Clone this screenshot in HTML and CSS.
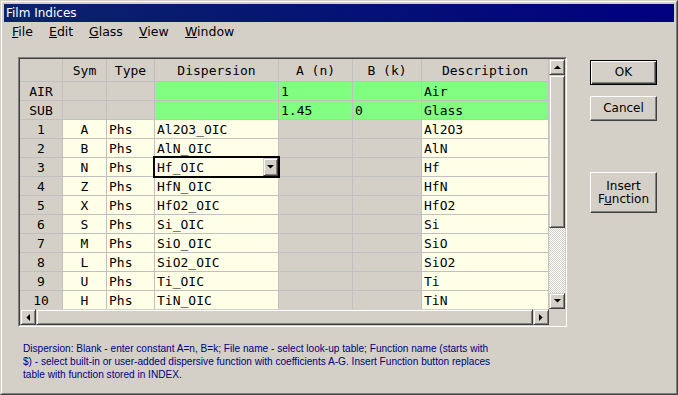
FILE: index.html
```html
<!DOCTYPE html>
<html>
<head>
<meta charset="utf-8">
<title>Film Indices</title>
<link rel="stylesheet" href="styles.css">
</head>
<body>
<div class="window">
  <div class="frame">
    <div class="titlebar"><span class="title">Film Indices</span></div>
    <div class="menubar">
      <span class="menu m-file"><u>F</u>ile</span>
      <span class="menu m-edit"><u>E</u>dit</span>
      <span class="menu m-glass"><u>G</u>lass</span>
      <span class="menu m-view"><u>V</u>iew</span>
      <span class="menu m-window"><u>W</u>indow</span>
    </div>
    <div class="client">
      <div class="main">
        <div class="gridframe">
          <div class="gridinner">
            <div class="gridtop">
              <div class="viewport">
                <div class="grid">
                  <div class="cell h"></div><div class="cell h ctr">Sym</div><div class="cell h ctr">Type</div><div class="cell h ctr">Dispersion</div><div class="cell h ctr">A (n)</div><div class="cell h ctr">B (k)</div><div class="cell h ctr">Description</div>

                  <div class="cell rh">AIR</div><div class="cell g"></div><div class="cell g"></div><div class="cell gr"></div><div class="cell gr">1</div><div class="cell gr"></div><div class="cell gr">Air</div>
                  <div class="cell rh">SUB</div><div class="cell g"></div><div class="cell g"></div><div class="cell gr"></div><div class="cell gr">1.45</div><div class="cell gr">0</div><div class="cell gr">Glass</div>

                  <div class="cell rh">1</div><div class="cell c ctr">A</div><div class="cell c">Phs</div><div class="cell c">Al2O3_OIC</div><div class="cell g"></div><div class="cell g"></div><div class="cell c">Al2O3</div>
                  <div class="cell rh">2</div><div class="cell c ctr">B</div><div class="cell c">Phs</div><div class="cell c">AlN_OIC</div><div class="cell g"></div><div class="cell g"></div><div class="cell c">AlN</div>
                  <div class="cell rh">3</div><div class="cell c ctr">N</div><div class="cell c">Phs</div><div class="cell c editcell"><div class="editor"><span class="edtext">Hf_OIC</span><span class="ddbtn"><svg width="7" height="4" viewBox="0 0 7 4"><polygon points="0,0 7,0 3.5,3.6" fill="#000"/></svg></span></div></div><div class="cell g"></div><div class="cell g"></div><div class="cell c">Hf</div>
                  <div class="cell rh">4</div><div class="cell c ctr">Z</div><div class="cell c">Phs</div><div class="cell c">HfN_OIC</div><div class="cell g"></div><div class="cell g"></div><div class="cell c">HfN</div>
                  <div class="cell rh">5</div><div class="cell c ctr">X</div><div class="cell c">Phs</div><div class="cell c">HfO2_OIC</div><div class="cell g"></div><div class="cell g"></div><div class="cell c">HfO2</div>
                  <div class="cell rh">6</div><div class="cell c ctr">S</div><div class="cell c">Phs</div><div class="cell c">Si_OIC</div><div class="cell g"></div><div class="cell g"></div><div class="cell c">Si</div>
                  <div class="cell rh">7</div><div class="cell c ctr">M</div><div class="cell c">Phs</div><div class="cell c">SiO_OIC</div><div class="cell g"></div><div class="cell g"></div><div class="cell c">SiO</div>
                  <div class="cell rh">8</div><div class="cell c ctr">L</div><div class="cell c">Phs</div><div class="cell c">SiO2_OIC</div><div class="cell g"></div><div class="cell g"></div><div class="cell c">SiO2</div>
                  <div class="cell rh">9</div><div class="cell c ctr">U</div><div class="cell c">Phs</div><div class="cell c">Ti_OIC</div><div class="cell g"></div><div class="cell g"></div><div class="cell c">Ti</div>
                  <div class="cell rh">10</div><div class="cell c ctr">H</div><div class="cell c">Phs</div><div class="cell c">TiN_OIC</div><div class="cell g"></div><div class="cell g"></div><div class="cell c">TiN</div>
                </div>
              </div>
              <div class="vscroll">
                <div class="sbtn"><svg width="7" height="4" viewBox="0 0 7 4"><polygon points="0,4 7,4 3.5,0.4" fill="#000"/></svg></div>
                <div class="thumb vthumb"></div>
                <div class="track"></div>
                <div class="sbtn"><svg width="7" height="4" viewBox="0 0 7 4"><polygon points="0,0 7,0 3.5,3.6" fill="#000"/></svg></div>
              </div>
            </div>
            <div class="hbar">
              <div class="hscroll">
                <div class="sbtn"><svg width="4" height="7" viewBox="0 0 4 7"><polygon points="4,0 4,7 0.4,3.5" fill="#000"/></svg></div>
                <div class="thumb hthumb"></div>
                <div class="sbtn"><svg width="4" height="7" viewBox="0 0 4 7"><polygon points="0,0 0,7 3.6,3.5" fill="#000"/></svg></div>
              </div>
              <div class="corner"></div>
            </div>
          </div>
        </div>
        <div class="buttons">
          <div class="btn default"><span>OK</span></div>
          <div class="btn cancel"><span>Cancel</span></div>
          <div class="btn insert"><span>Insert<br>F<u>u</u>nction</span></div>
        </div>
      </div>
      <p class="help">Dispersion: Blank - enter constant A=n, B=k; File name - select look-up table; Function name (starts with<br>$) - select built-in or user-added dispersive function with coefficients A-G. Insert Function button replaces<br>table with function stored in INDEX.</p>
    </div>
  </div>
</div>
</body>
</html>
```

FILE: styles.css
```css
html, body {
  margin: 0;
  padding: 0;
  background: #d4d0c8;
}

.window {
  width: 678px;
  height: 395px;
  box-sizing: border-box;
  border: 1px solid;
  border-color: #d4d0c8 #404040 #404040 #d4d0c8;
  background: #d4d0c8;
  font-family: "DejaVu Sans", sans-serif;
  font-size: 12px;
  color: #000;
}

.frame {
  height: 100%;
  box-sizing: border-box;
  border: 1px solid;
  border-color: #ffffff #808080 #808080 #ffffff;
  padding: 2px;
}

.titlebar {
  height: 18px;
  background: linear-gradient(to right, #0a246a, #000080);
  color: #fff;
  line-height: 18px;
  padding-left: 2px;
  white-space: nowrap;
}

.menubar {
  height: 20px;
  line-height: 20px;
  display: flex;
  padding-left: 8px;
  white-space: nowrap;
  font-size: 12.5px;
}
.menu { display: block; }
.m-file { width: 37px; }
.m-edit { width: 40px; }
.m-glass { width: 50px; }
.m-view { width: 46px; }

.client {
  padding: 15px 0 0 14px;
}

.main {
  display: flex;
  align-items: flex-start;
}

.gridframe {
  width: 549px;
  height: 270px;
  box-sizing: border-box;
  border: 1px solid;
  border-color: #808080 #ffffff #ffffff #808080;
}
.gridinner {
  height: 100%;
  box-sizing: border-box;
  border: 1px solid;
  border-color: #404040 #d4d0c8 #d4d0c8 #404040;
  display: flex;
  flex-direction: column;
}
.gridtop {
  display: flex;
  height: 250px;
}
.viewport {
  width: 529px;
  height: 250px;
  overflow: hidden;
}

.grid {
  display: grid;
  grid-template-columns: 43px 44px 48px 124px 74px 69px 127px;
  grid-template-rows: 23px repeat(12, 19px);
  font-family: "DejaVu Sans Mono", monospace;
  font-size: 13px;
}
.cell {
  box-sizing: border-box;
  border-right: 1px solid #c0c0c0;
  border-bottom: 1px solid #c0c0c0;
  padding: 1px 2px 0 2px;
  line-height: 18px;
  white-space: nowrap;
  overflow: hidden;
}
.h {
  background: #d4d0c8;
  line-height: 21px;
}
.rh {
  background: #d4d0c8;
  text-align: center;
}
.g { background: #d4d0c8; }
.gr { background: #80ff80; }
.c { background: #ffffe8; }
.ctr { text-align: center; }

.editcell {
  position: relative;
  overflow: visible;
}
.editor {
  position: absolute;
  left: -2px;
  top: -2px;
  width: 127px;
  height: 22px;
  box-sizing: border-box;
  border: 2px solid #000;
  background: #ffffe8;
  display: flex;
  z-index: 2;
}
.edtext {
  flex: 1;
  padding: 1px 0 0 2px;
  line-height: 18px;
}
.ddbtn {
  width: 15px;
  height: 18px;
  box-sizing: border-box;
  background: #d4d0c8;
  border: 1px solid;
  border-color: #d4d0c8 #404040 #404040 #d4d0c8;
  box-shadow: inset 1px 1px #ffffff, inset -1px -1px #808080;
  display: flex;
  align-items: center;
  justify-content: center;
}

.vscroll {
  width: 16px;
  height: 250px;
  display: flex;
  flex-direction: column;
}
.sbtn {
  width: 16px;
  height: 16px;
  flex: none;
  box-sizing: border-box;
  background: #d4d0c8;
  border: 1px solid;
  border-color: #d4d0c8 #404040 #404040 #d4d0c8;
  box-shadow: inset 1px 1px #ffffff, inset -1px -1px #808080;
  display: flex;
  align-items: center;
  justify-content: center;
}
.sbtn svg { display: block; }
.thumb {
  box-sizing: border-box;
  background: #d4d0c8;
  border: 1px solid;
  border-color: #d4d0c8 #404040 #404040 #d4d0c8;
  box-shadow: inset 1px 1px #ffffff, inset -1px -1px #808080;
}
.vthumb {
  height: 153px;
  flex: none;
}
.track {
  flex: 1;
  background: repeating-conic-gradient(#d4d0c8 0 25%, #ffffff 0 50%) 0 0 / 2px 2px;
}

.hbar {
  display: flex;
  height: 16px;
}
.hscroll {
  width: 529px;
  display: flex;
}
.hthumb {
  flex: 1;
  height: 16px;
}
.corner {
  width: 16px;
  background: #d4d0c8;
}

.buttons {
  margin-left: 23px;
  width: 67px;
  display: flex;
  flex-direction: column;
}
.btn {
  box-sizing: border-box;
  width: 67px;
  height: 25px;
  border: 1px solid;
  border-color: #ffffff #404040 #404040 #ffffff;
  box-shadow: inset -1px -1px #808080;
  display: flex;
  align-items: center;
  justify-content: center;
  text-align: center;
  line-height: 13px;
}
.btn.default {
  margin-top: 3px;
  border-color: #000;
  box-shadow: inset 1px 1px #ffffff, inset -1px -1px #404040, inset -2px -2px #808080;
}
.btn.cancel {
  margin-top: 11px;
}
.btn.insert {
  margin-top: 51px;
  height: 41px;
}

.help {
  margin: 15px 0 0 5px;
  font-family: "Liberation Sans", sans-serif;
  font-size: 10.1px;
  line-height: 13px;
  color: #000080;
  white-space: nowrap;
}
```
